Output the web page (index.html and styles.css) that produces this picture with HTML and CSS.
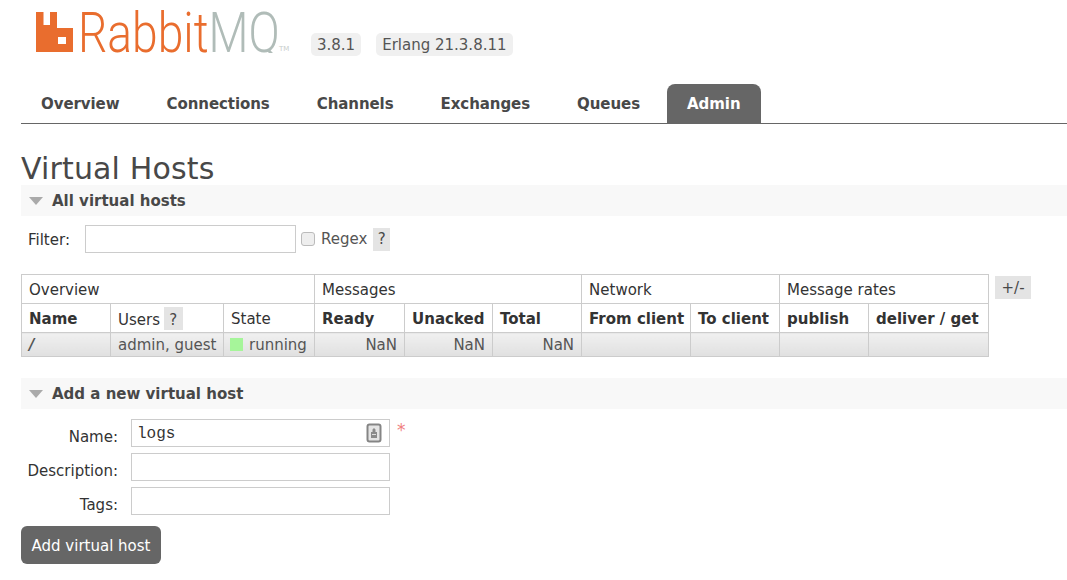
FILE: index.html
```html
<!DOCTYPE html>
<html lang="en">
<head>
    <meta charset="UTF-8">
    <meta name="viewport" content="width=device-width, initial-scale=1.0">
    <title>RabbitMQ Management</title>
    <link rel="stylesheet" href="styles.css">
</head>
<body>
    <!-- Logo and versions -->
    <div class="header">
        <div class="logo">
            <svg class="logo-mark" width="37" height="40" viewBox="0 0 37 40">
                <path fill="#e96d2e" d="M0 0H7.500V13H14V0H21V16H37V40H0Z"/>
                <rect x="22" y="25" width="8" height="7" fill="#fff"/>
            </svg>
            <div class="logo-word"><span class="logo-rabbit">Rabbit</span><span class="logo-mq">MQ</span></div>
            <span class="logo-tm">TM</span>
        </div>
        <span class="version">3.8.1</span>
        <span class="version">Erlang 21.3.8.11</span>
    </div>

    <!-- Tabs -->
    <div class="tabs">
        <a class="tab">Overview</a>
        <a class="tab">Connections</a>
        <a class="tab">Channels</a>
        <a class="tab">Exchanges</a>
        <a class="tab">Queues</a>
        <a class="tab active">Admin</a>
    </div>

    <h1>Virtual Hosts</h1>

    <div class="section-title"><span class="arrow"></span>All virtual hosts</div>
    <div class="filter">
        <label class="filter-label">Filter:</label>
        <input class="filter-input" type="text">
        <input class="check" type="checkbox">
        <label class="regex">Regex</label>
        <span class="help">?</span>
    </div>

    <div class="table-row">
        <table>
            <colgroup>
                <col class="c89"><col class="c113"><col class="c91">
                <col class="c90"><col class="c88"><col class="c89">
                <col class="c109"><col class="c89">
                <col class="c89"><col class="c120">
            </colgroup>
            <tr class="group">
                <th colspan="3">Overview</th>
                <th colspan="3">Messages</th>
                <th colspan="2">Network</th>
                <th colspan="2">Message rates</th>
            </tr>
            <tr class="heads">
                <th class="strong">Name</th>
                <th>Users <span class="help help-small">?</span></th>
                <th>State</th>
                <th class="strong">Ready</th>
                <th class="strong">Unacked</th>
                <th class="strong">Total</th>
                <th class="strong">From client</th>
                <th class="strong">To client</th>
                <th class="strong">publish</th>
                <th class="strong">deliver / get</th>
            </tr>
            <tr class="data">
                <td class="vhost">/</td>
                <td>admin, guest</td>
                <td><span class="state"></span>running</td>
                <td class="num">NaN</td>
                <td class="num">NaN</td>
                <td class="num">NaN</td>
                <td></td><td></td><td></td><td></td>
            </tr>
        </table>
        <span class="plus-minus">+/-</span>
    </div>

    <div class="section-title second"><span class="arrow"></span>Add a new virtual host</div>
    <form class="host-form">
        <label>Name:</label>
        <div class="field">
            <input class="name-input" type="text" value="logs">
            <svg class="key-icon" width="16" height="20" viewBox="0 0 16 20">
                <rect x="1.500" y="1.500" width="13" height="17" rx="2" fill="#e4e4e4" stroke="#858585" stroke-width="2"/>
                <path fill="#8a8a8a" d="M8 5l1.500 1.500V9H11v6H5V9h1.500V6.500Z"/>
                <rect x="6" y="11" width="4" height="1" fill="#ddd"/>
            </svg>
            <span class="required">*</span>
        </div>
        <label>Description:</label>
        <input type="text">
        <label>Tags:</label>
        <input type="text">
    </form>
    <button class="add-btn" type="button">Add virtual host</button>
</body>
</html>
```

FILE: styles.css
```css
body {
    margin: 0;
    padding: 0 0 0 21px;
    font-family: "DejaVu Sans", Verdana, sans-serif;
    font-size: 15px;
    color: #484848;
    background-color: white;
    height: 580px;
    overflow: hidden;
}
.header {
    display: flex;
    align-items: flex-start;
    height: 84px;
}
.logo {
    display: flex;
    align-items: flex-start;
    width: 290px;
    flex: none;
    padding: 12px 0 0 15px;
    box-sizing: border-box;
}
.logo-mark {
    margin-right: 5px;
    flex: none;
}
.logo-word {
    width: 201px;
    height: 41px;
    flex: none;
    font-family: Roboto, sans-serif;
    font-weight: 300;
    font-size: 55px;
    line-height: 42px;
    white-space: nowrap;
    transform: scaleX(0.84);
    transform-origin: left top;
    clip-path: inset(-6px -40px 0 0);
}
.logo-rabbit {
    color: #e96d2e;
}
.logo-mq {
    color: #b0bcb8;
}
.logo-tm {
    color: #c8cecc;
    font-size: 7px;
    line-height: 9px;
    margin-top: 33px;
}
.version {
    height: 23px;
    background-color: #f0f0f0;
    border-radius: 5px;
    padding: 0 6px;
    margin-top: 33px;
    line-height: 25px;
    color: #555;
}
.version + .version {
    margin-left: 15px;
}
.tabs {
    display: flex;
    height: 39px;
    border-bottom: 1px solid #666;
}
.tab {
    padding: 0 20px;
    margin-right: 7px;
    line-height: 40px;
    font-weight: bold;
    letter-spacing: -0.07px;
    color: #484848;
    border-radius: 8px 8px 0 0;
}
.tab.active {
    background-color: #666;
    color: white;
}
h1 {
    margin: 28px 0 0;
    font-size: 30px;
    font-weight: normal;
    line-height: 33px;
    letter-spacing: 0.15px;
    color: #484848;
}
.section-title {
    height: 31px;
    padding-top: 1px;
    box-sizing: border-box;
    background-color: #f8f8f8;
    font-weight: bold;
    color: #484848;
    display: flex;
    align-items: center;
}
.section-title.second {
    margin-top: 21px;
}
.arrow {
    width: 0;
    height: 0;
    margin: 0 9px 0 8px;
    border-left: 7px solid transparent;
    border-right: 7px solid transparent;
    border-top: 8px solid #aaa;
}
.filter {
    display: flex;
    align-items: center;
    height: 28px;
    margin-top: 9px;
}
.filter-label {
    margin-left: 7px;
    width: 57px;
    padding-top: 1px;
    color: #333;
}
.filter-input {
    width: 211px;
    height: 28px;
    box-sizing: border-box;
    border: 1px solid #ccc;
    margin: 0;
}
.check {
    width: 14px;
    height: 14px;
    margin: 0 6px 0 5px;
    appearance: none;
    background-color: #eee;
    border: 1px solid #bbb;
    border-radius: 3px;
}
.regex {
    color: #555;
}
.help {
    display: inline-block;
    width: 17px;
    height: 23px;
    line-height: 23px;
    text-align: center;
    background-color: #e4e4e4;
    margin-left: 6px;
    color: #484848;
}
.help-small {
    width: 19px;
    margin-left: -1px;
    line-height: 26px;
}
.table-row {
    display: flex;
    align-items: flex-start;
    margin-top: 21px;
}
table {
    border-collapse: collapse;
    table-layout: fixed;
    width: 968px;
    flex: none;
}
.c89 { width: 89px; }
.c113 { width: 113px; }
.c91 { width: 91px; }
.c90 { width: 90px; }
.c88 { width: 88px; }
.c109 { width: 109px; }
.c120 { width: 120px; }
th, td {
    border: 1px solid #ccc;
    padding: 0 7px;
    text-align: left;
    font-weight: normal;
    white-space: nowrap;
    overflow: hidden;
}
tr.group th, tr.heads th {
    height: 29px;
    padding-top: 1px;
    box-sizing: border-box;
    color: #333;
}
th.strong {
    font-weight: bold;
    color: #111;
}
tr.data td {
    height: 24px;
    box-sizing: border-box;
    background: linear-gradient(#f0f0f0, #e0e0e0);
    color: #555;
}
td.vhost {
    font-weight: bold;
    font-style: italic;
    color: #111;
}
td.num {
    text-align: right;
}
.state {
    display: inline-block;
    width: 13px;
    height: 13px;
    background-color: #a6f59a;
    margin: 0 6px 0 -1px;
    vertical-align: -1px;
}
.plus-minus {
    width: 36px;
    height: 23px;
    line-height: 25px;
    margin: 2px 0 0 6px;
    text-align: center;
    background-color: #e4e4e4;
    color: #484848;
}
.host-form {
    display: grid;
    grid-template-columns: 97px 259px;
    gap: 6px 13px;
    align-items: center;
    margin-top: 10px;
}
.host-form label {
    text-align: right;
    color: #333;
    padding-top: 8px;
}
.host-form input {
    display: block;
    height: 28px;
    width: 259px;
    box-sizing: border-box;
    border: 1px solid #ccc;
    margin: 0;
    padding: 0 5px;
}
.field {
    position: relative;
    height: 28px;
}
.host-form .name-input {
    font-family: "Liberation Mono", monospace;
    font-size: 16px;
    color: #333;
    padding-top: 2px;
}
.key-icon {
    position: absolute;
    right: 8px;
    top: 4px;
}
.required {
    position: absolute;
    left: 266px;
    top: 1px;
    font-size: 17px;
    color: #f08080;
}
.add-btn {
    display: block;
    margin-top: 11px;
    width: 140px;
    height: 38px;
    background-color: #666;
    color: white;
    border: none;
    border-radius: 6px;
    font-family: inherit;
    font-size: 15px;
    cursor: pointer;
    padding: 2px 0 0;
}
```
